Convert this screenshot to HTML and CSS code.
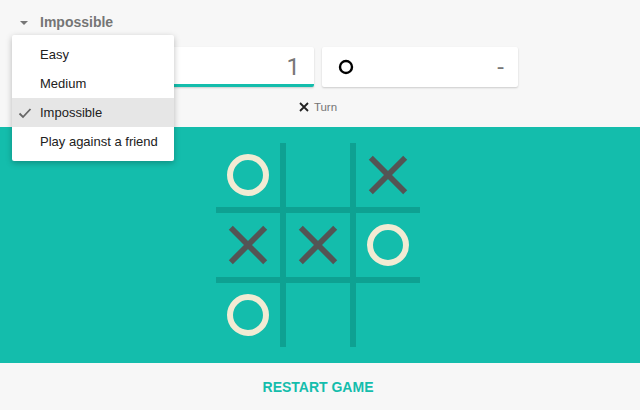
FILE: index.html
```html
<!DOCTYPE html>
<html>
<head>
<meta charset="utf-8">
<link rel="stylesheet" href="styles.css">
</head>
<body>
<div class="app">
  <div class="header">
    <span class="arrow"></span>
    <span class="mode">Impossible</span>
  </div>
  <div class="scores">
    <div class="card active">
      <svg class="xs" viewBox="0 0 14 14" width="14" height="14"><path d="M2 2L12 12M12 2L2 12" stroke="#000" stroke-width="2.2" fill="none"/></svg>
      <span class="num">1</span>
    </div>
    <div class="card">
      <svg class="os" viewBox="0 0 16 16" width="16" height="16"><circle cx="8" cy="8" r="6" stroke="#000" stroke-width="2.4" fill="none"/></svg>
      <span class="num">-</span>
    </div>
  </div>
  <div class="turn">
    <svg viewBox="0 0 10 10" width="10" height="10"><path d="M1 1L9 9M9 1L1 9" stroke="#222" stroke-width="1.8" fill="none"/></svg>
    <span>Turn</span>
  </div>
  <div class="field">
    <div class="board">
      <div class="cell"><svg class="o" viewBox="0 0 44 44"><circle cx="22" cy="22" r="18" stroke="#f2ebd3" stroke-width="6" fill="none"/></svg></div>
      <div class="cell"></div>
      <div class="cell"><svg class="x" viewBox="0 0 44 44"><path d="M4 4L40 40M40 4L4 40" stroke="#545454" stroke-width="6" fill="none"/></svg></div>
      <div class="cell"><svg class="x" viewBox="0 0 44 44"><path d="M4 4L40 40M40 4L4 40" stroke="#545454" stroke-width="6" fill="none"/></svg></div>
      <div class="cell"><svg class="x" viewBox="0 0 44 44"><path d="M4 4L40 40M40 4L4 40" stroke="#545454" stroke-width="6" fill="none"/></svg></div>
      <div class="cell"><svg class="o" viewBox="0 0 44 44"><circle cx="22" cy="22" r="18" stroke="#f2ebd3" stroke-width="6" fill="none"/></svg></div>
      <div class="cell"><svg class="o" viewBox="0 0 44 44"><circle cx="22" cy="22" r="18" stroke="#f2ebd3" stroke-width="6" fill="none"/></svg></div>
      <div class="cell"></div>
      <div class="cell"></div>
    </div>
  </div>
  <div class="footer">RESTART GAME</div>

  <div class="menu">
    <div class="item">Easy</div>
    <div class="item">Medium</div>
    <div class="item selected">
      <svg class="check" viewBox="0 0 14 12" width="14" height="12"><path d="M1.5 6.5L5 10L12.5 2" stroke="#666" stroke-width="1.8" fill="none"/></svg>
      Impossible
    </div>
    <div class="item">Play against a friend</div>
  </div>
</div>
</body>
</html>
```

FILE: styles.css
```css
* { box-sizing: border-box; }
html, body { margin: 0; padding: 0; }
body {
  background: #f7f7f7;
  font-family: "Liberation Sans", Arial, sans-serif;
  width: 640px;
  height: 410px;
  overflow: hidden;
}
.app { position: relative; width: 640px; height: 410px; }

.header {
  height: 44px;
  display: flex;
  align-items: center;
  padding-left: 20px;
}
.arrow {
  width: 0; height: 0;
  border-left: 4px solid transparent;
  border-right: 4px solid transparent;
  border-top: 4px solid #777;
  margin-right: 12px;
  margin-top: 1px;
}
.mode {
  font-size: 14px;
  font-weight: bold;
  color: #757575;
}

.scores {
  display: flex;
  justify-content: center;
  gap: 8px;
  padding-top: 3px;
  padding-right: 4px;
}
.card {
  width: 196px;
  height: 40px;
  background: #fff;
  border-radius: 2px;
  box-shadow: 0 1px 2px rgba(0,0,0,0.18);
  display: flex;
  align-items: center;
  justify-content: space-between;
  padding: 0 14px 0 16px;
}
.card.active {
  border-bottom: 3px solid #14bdac;
  padding-top: 3px;
}
.num {
  font-family: Roboto, "Liberation Sans", sans-serif;
  font-weight: 400;
  font-size: 24px;
  color: #777;
}

.turn {
  height: 40px;
  display: flex;
  align-items: center;
  justify-content: center;
  gap: 5px;
  padding-right: 4px;
  font-size: 11.5px;
  color: #757575;
}

.field {
  background: #14bdac;
  height: 236px;
  display: flex;
  justify-content: center;
  align-items: center;
  padding-right: 4px;
}
.board {
  width: 204px;
  height: 204px;
  display: grid;
  grid-template-columns: 64px 64px 64px;
  grid-template-rows: 64px 64px 64px;
  gap: 6px;
  background: #0ea192;
}
.cell {
  background: #14bdac;
  display: flex;
  align-items: center;
  justify-content: center;
}
.cell .o { width: 44px; height: 44px; }
.cell .x { width: 42px; height: 42px; }

.footer {
  height: 47px;
  display: flex;
  align-items: center;
  justify-content: center;
  padding-right: 4px;
  font-size: 14px;
  font-weight: bold;
  color: #14bdac;
}

.menu {
  position: absolute;
  left: 12px;
  top: 35px;
  width: 162px;
  padding: 5px 0;
  background: #fff;
  border-radius: 2px;
  box-shadow: 0 2px 6px rgba(0,0,0,0.25);
}
.item {
  position: relative;
  height: 29px;
  line-height: 29px;
  padding-left: 28px;
  font-size: 13px;
  color: #212121;
}
.item.selected { background: #e6e6e6; }
.check {
  position: absolute;
  left: 6px;
  top: 9px;
}
```
